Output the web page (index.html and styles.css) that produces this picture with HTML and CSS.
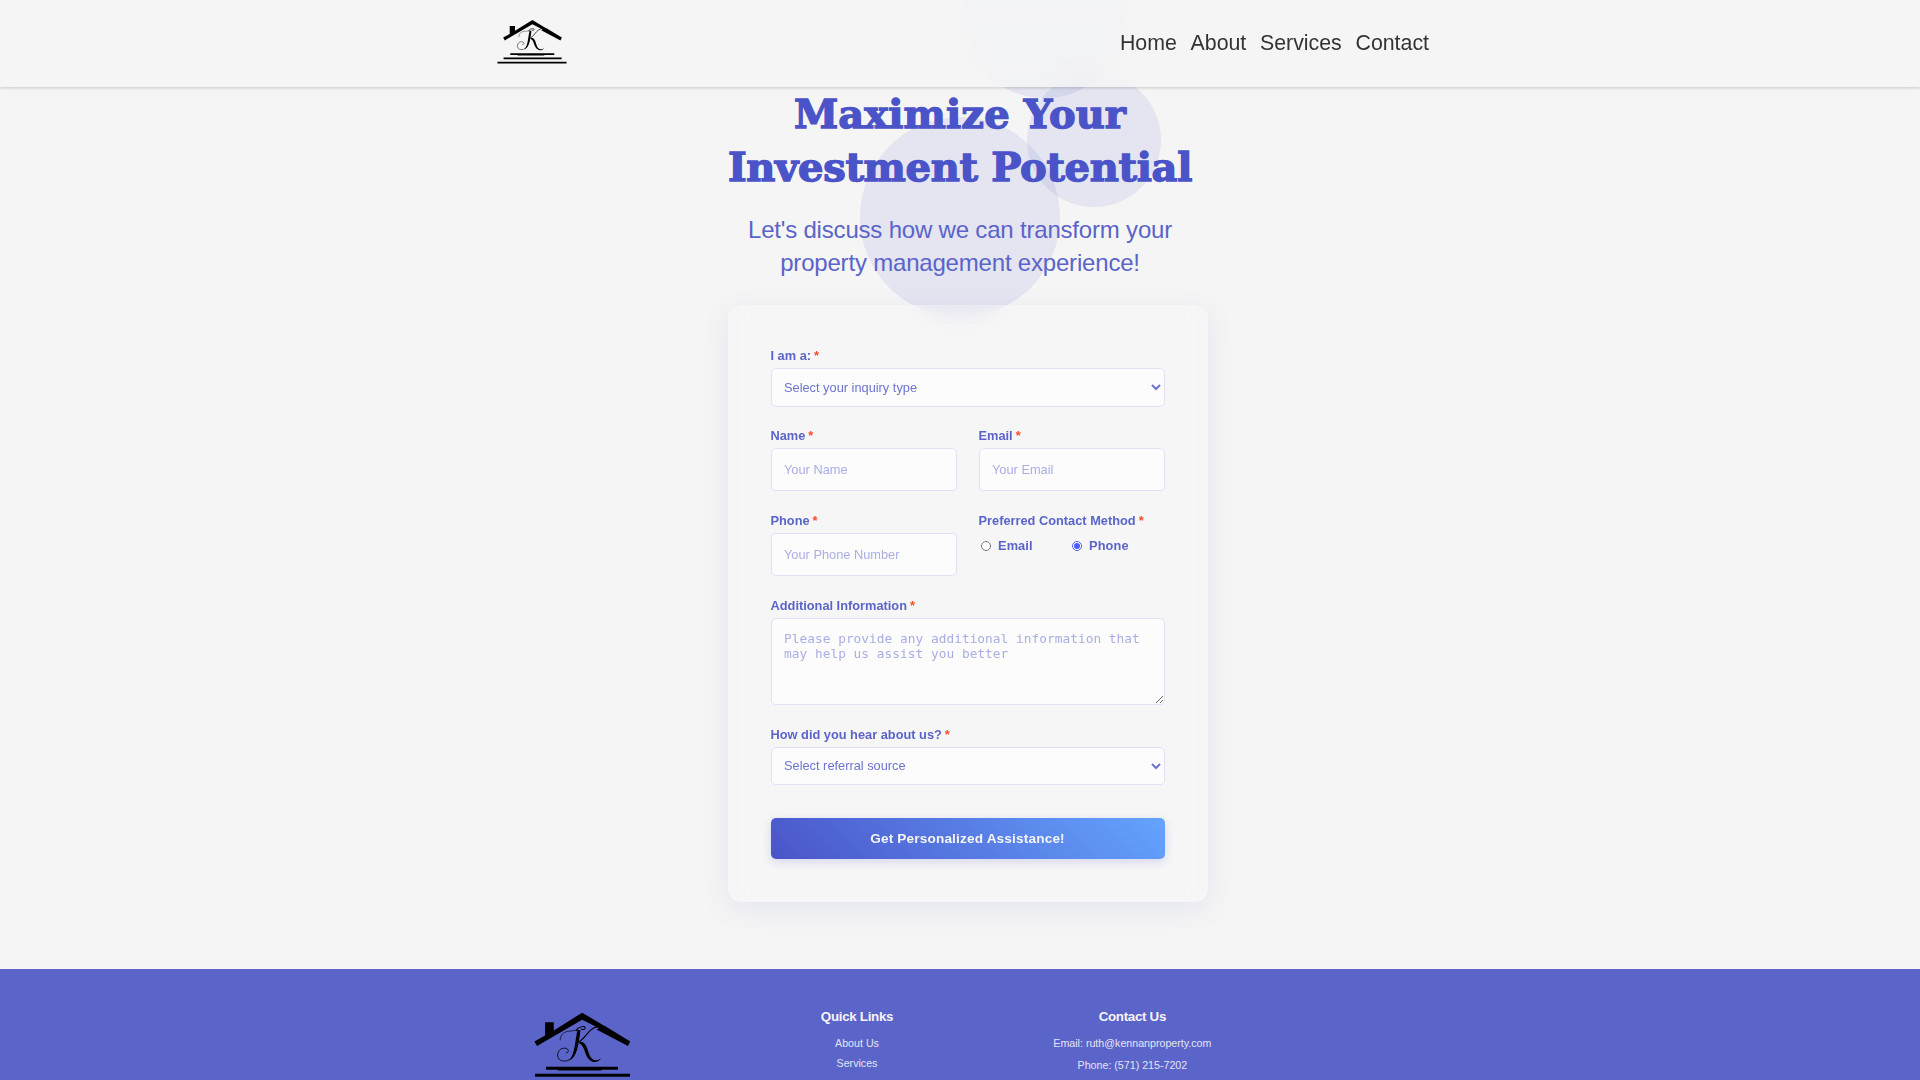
FILE: index.html
```html
<!DOCTYPE html>
<html lang="en">
<head>
<meta charset="utf-8">
<title>Contact</title>
<link rel="stylesheet" href="styles.css">
</head>
<body>
<svg class="defs" width="0" height="0" aria-hidden="true">
  <symbol id="logo" viewBox="40 34 350 220">
    <path d="M74 125 106 107V68H132V92L217 39 284 79 272 88 217 60 82 139Z"/>
    <path d="M284 78 361 125 354 139 260 89Z"/>
    <path d="M151 122C151 104 165 93 184 94L201 91" fill="none" stroke="#000" stroke-width="2"/>
    <path d="M198 94C204 80 224 78 226 84C227 90 216 91 213 87" fill="none" stroke="#000" stroke-width="3"/>
    <path d="M202 91C214 94 208 102 204 125C199 153 192 184 163 184C149 184 142 174 144 161C147 147 164 141 173 148C178 153 175 160 168 159" fill="none" stroke="#000" stroke-width="2.5"/>
    <path d="M203 91H212C206 132 203 174 177 182C196 165 195 125 203 91Z"/>
    <path d="M199 129C223 128 234 82 266 81C276 80 281 84 273 88C269 89 266 87 268 84" fill="none" stroke="#000" stroke-width="3.5"/>
    <path d="M213 126C231 127 233 153 240 168C247 182 262 187 274 174C264 195 240 188 231 170C222 151 222 136 206 130Z"/>
    <path d="M109 201H324V210H275V212H144V210H109ZM76 222H360V231H76ZM46 243H384V252H46Z"/>
  </symbol>
</svg>

<header class="nav">
  <svg class="nav-logo"><use href="#logo"/></svg>
  <nav class="nav-links">
    <a>Home</a><a>About</a><a>Services</a><a>Contact</a>
  </nav>
</header>

<main class="main">
  <div class="circle circle-a"></div>
  <div class="circle circle-b"></div>
  <div class="circle circle-c"></div>
  <section class="intro">
    <h1><span>Maximize Your</span><br>Investment Potential</h1>
    <p>Let's discuss how we can transform your<br>property management experience!</p>
  </section>
  <form class="card">
    <div class="field">
      <label>I am a:<i>*</i></label>
      <select class="select-lg"><option>Select your inquiry type</option></select>
    </div>
    <div class="row">
      <div class="field"><label>Name<i>*</i></label><input type="text" placeholder="Your Name"></div>
      <div class="field"><label>Email<i>*</i></label><input type="text" placeholder="Your Email"></div>
    </div>
    <div class="row">
      <div class="field"><label>Phone<i>*</i></label><input type="text" placeholder="Your Phone Number"></div>
      <div class="field">
        <label>Preferred Contact Method<i>*</i></label>
        <div class="radios">
          <label><input type="radio" name="method">Email</label>
          <label><input type="radio" name="method" checked>Phone</label>
        </div>
      </div>
    </div>
    <div class="field">
      <label>Additional Information<i>*</i></label>
      <textarea placeholder="Please provide any additional information that may help us assist you better"></textarea>
    </div>
    <div class="field">
      <label>How did you hear about us?<i>*</i></label>
      <select><option>Select referral source</option></select>
    </div>
    <button type="button">Get Personalized Assistance!</button>
  </form>
</main>

<footer class="footer">
  <svg class="footer-logo"><use href="#logo"/></svg>
  <div class="footer-col links">
    <h4>Quick Links</h4>
    <a>About Us</a>
    <a>Services</a>
  </div>
  <div class="footer-col contact">
    <h4>Contact Us</h4>
    <p>Email: ruth@kennanproperty.com</p>
    <p>Phone: (571) 215-7202</p>
  </div>
</footer>
</body>
</html>
```
FILE: styles.css
```css
* { box-sizing: border-box; }
body {
  margin: 0;
  height: 1080px;
  overflow: hidden;
  background: #f5f5f5;
  font-family: "Liberation Sans", Arial, sans-serif;
}
.defs { position: absolute; }

.nav {
  position: fixed;
  inset: 0 0 auto;
  z-index: 5;
  height: 87px;
  padding: 0 491px 0 496px;
  display: flex;
  justify-content: space-between;
  align-items: flex-start;
  background: rgba(245, 245, 245, .82);
  backdrop-filter: blur(10px);
  box-shadow: 0 1px 3px rgba(0, 0, 0, .18);
}
.nav-logo { width: 72px; height: 45px; margin-top: 19px; }
.nav-links {
  display: flex;
  gap: 13.7px;
  margin-top: 31px;
  font-size: 21.33px;
  line-height: 25px;
  color: #333;
}

.main {
  position: relative;
  height: 969px;
  padding-top: 87px;
}
.circle {
  position: absolute;
  border-radius: 50%;
  background: rgba(74, 84, 200, .1);
}
.circle-a { left: 860px; top: 117px; width: 200px; height: 200px; }
.circle-b { left: 1027px; top: 73px; width: 134px; height: 134px; }
.circle-c { left: 961px; top: -69px; width: 167px; height: 167px; }

.intro { position: relative; height: 218px; text-align: center; }
.intro h1 {
  margin: 0;
  color: #4a54c8;
  font: bold 40px/53px "DejaVu Serif", serif;
  letter-spacing: -.3px;
  -webkit-text-stroke: 1.4px #4a54c8;
  stroke-linejoin: round;
}
.intro h1 span { letter-spacing: .1px; }
.intro p {
  margin: 20px 0 0;
  color: #5b64c9;
  font-size: 24px;
  line-height: 33.3px;
  letter-spacing: -.19px;
}

.card {
  position: relative;
  width: 480px;
  height: 597px;
  margin-left: 727.5px;
  padding: 43px;
  display: flex;
  flex-direction: column;
  gap: 22px;
  border-radius: 13px;
  background: rgba(255, 255, 255, .1);
  backdrop-filter: blur(9px);
  box-shadow: 0 7px 28px rgba(74, 84, 200, .1);
}
.row { display: grid; grid-template-columns: 1fr 1fr; gap: 22px; }
.field { display: flex; flex-direction: column; }
.field label {
  height: 20px;
  color: #5b64c9;
  font-size: 12.8px;
  font-weight: bold;
  line-height: 16px;
  white-space: nowrap;
}
.field i { margin-left: 3px; color: #ff4b2b; font-style: normal; }
input[type="text"], select, textarea {
  width: 100%;
  margin: 0;
  border: 1.5px solid #e0e1f5;
  border-radius: 5px;
  background: #fcfcfc;
  color: #6c74d0;
  font-family: "Liberation Sans", Arial, sans-serif;
  font-size: 12.8px;
}
input[type="text"] { height: 42.7px; padding: 0 12.5px; }
select { height: 38px; padding: 0 8.5px; }
.select-lg { height: 39px; margin-bottom: -.7px; }
textarea {
  display: block;
  height: 87px;
  padding: 12px 12px 12px 12.5px;
  font-family: "DejaVu Sans Mono", monospace;
  line-height: 15px;
  letter-spacing: .03px;
}
::placeholder { color: #a9aee3; opacity: 1; }
.radios { display: flex; padding-top: 5px; }
.radios label { display: flex; width: 91px; letter-spacing: .1px; }
.radios input { width: 10px; height: 10px; margin: 3px 7px 0 2.5px; accent-color: #4a5cff; }
button {
  flex: none;
  height: 41px;
  margin-top: 11px;
  border: 0;
  border-radius: 5px;
  background: linear-gradient(45deg, #4a54c8, #64a4ff);
  box-shadow: 0 3px 10px rgba(74, 84, 200, .2);
  color: #f5f5f5;
  font: bold 13.6px "Liberation Sans", Arial, sans-serif;
  letter-spacing: .17px;
}

.footer {
  height: 111px;
  padding: 42px 0 0 523px;
  display: flex;
  align-items: flex-start;
  background: #5b64c9;
  color: #f5f5f5;
  overflow: hidden;
}
.footer-logo { flex: none; width: 117px; height: 73.5px; }
.footer-col { display: flex; flex-direction: column; align-items: center; font-size: 10.67px; line-height: 14px; }
.footer-col h4 { margin: -2px 0 11px; font-size: 13.33px; line-height: 16px; letter-spacing: -.3px; }
.footer-col a, .footer-col p { margin: 0; color: #e3e4f5; }
.links { width: 200px; margin-left: 117px; gap: 0; }
.links a { margin-bottom: 6px; }
.contact { width: 200px; margin-left: 75.4px; }
.contact p { margin-bottom: 8px; }
```
